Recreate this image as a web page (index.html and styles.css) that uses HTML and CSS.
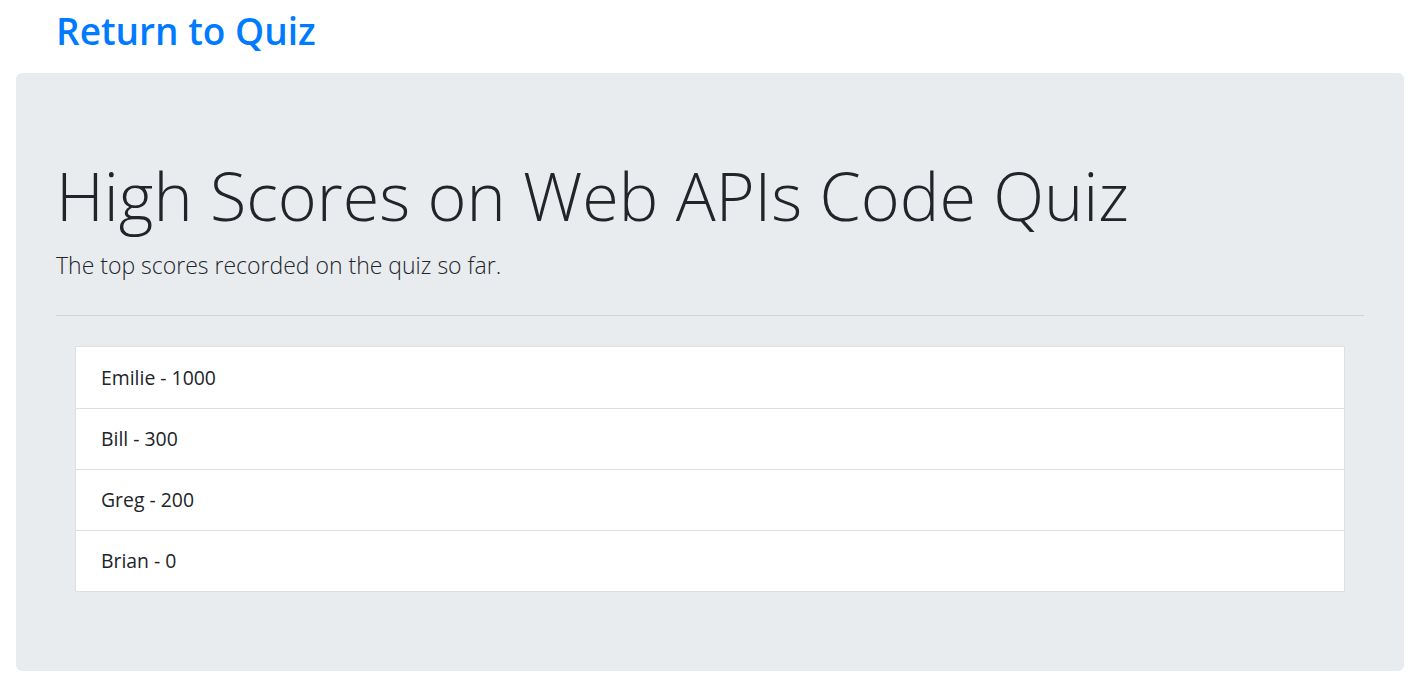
FILE: index.html
```html
<!DOCTYPE html>
<html>
<head>
<meta charset="utf-8">
<link rel="stylesheet" href="styles.css">
</head>
<body>
<div class="page">
  <h2 class="back"><a href="#">Return to Quiz</a></h2>
  <div class="jumbotron">
    <h1 class="title">High Scores on Web APIs Code Quiz</h1>
    <p class="lead">The top scores recorded on the quiz so far.</p>
    <hr class="rule">
    <ul class="scores">
      <li class="score">Emilie - 1000</li>
      <li class="score">Bill - 300</li>
      <li class="score">Greg - 200</li>
      <li class="score">Brian - 0</li>
    </ul>
  </div>
</div>
</body>
</html>
```

FILE: styles.css
```css
html, body {
  margin: 0;
  padding: 0;
  background: #fff;
}
body {
  font-family: "Open Sans", "Noto Sans", sans-serif;
  color: #212529;
}
.page {
  padding: 0 24px 0 16px;
}
.back {
  margin: 0;
  padding: 7px 0 0 40px;
  height: 73px;
  box-sizing: border-box;
  font-size: 37px;
  font-weight: 600;
  line-height: 48px;
}
.back a {
  color: #007bff;
  text-decoration: none;
}
.jumbotron {
  background: #e9ecef;
  border-radius: 6px;
  padding: 80px 40px;
  height: 598px;
  box-sizing: border-box;
}
.title {
  margin: 0 0 10px;
  font-size: 66.5px;
  font-weight: 300;
  line-height: 84px;
}
.lead {
  margin: 0 0 19px;
  font-size: 23px;
  font-weight: 300;
  line-height: 37.5px;
}
.rule {
  margin: 30px 0;
  border: 0;
  border-top: 1px solid rgba(0,0,0,.1);
}
.scores {
  list-style: none;
  margin: 0 19px;
  padding: 0;
  background: #fff;
  border: 1px solid rgba(0,0,0,.125);
}
.score {
  padding: 15px 25px;
  font-size: 19.4px;
  line-height: 30px;
  border-top: 1px solid rgba(0,0,0,.125);
}
.score:first-child {
  border-top: 0;
  padding-top: 16px;
}
```
